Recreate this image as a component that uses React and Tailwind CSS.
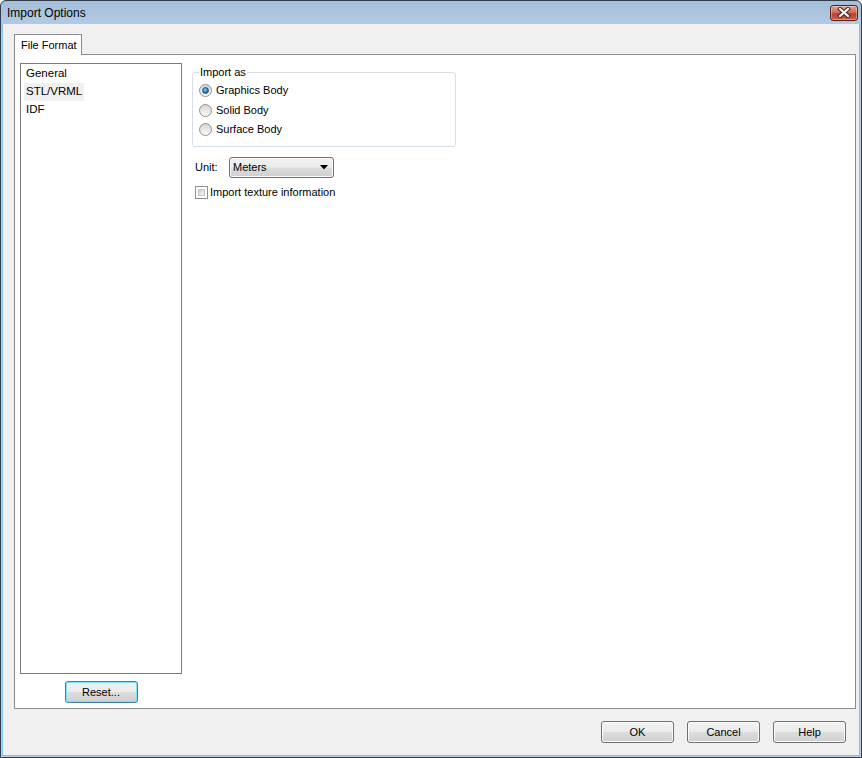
import React, { useState } from "react";

const font = { fontFamily: '"Liberation Sans", Arial, sans-serif' };

function CloseButton() {
  return (
    <div className="w-[28px] h-[16px] rounded-[3px] border border-[#5a1f1a] bg-[linear-gradient(to_bottom,#e3a08f_0%,#d0705d_45%,#b8402e_55%,#c8604c_100%)] flex items-center justify-center shadow-[inset_0_0_0_1px_rgba(255,255,255,0.35)]">
      <svg width="14" height="11" viewBox="0 0 14 11">
        <path d="M3 2 L11 9 M11 2 L3 9" stroke="#3b1d19" strokeWidth="4" strokeLinecap="square" />
        <path d="M3 2 L11 9 M11 2 L3 9" stroke="#ffffff" strokeWidth="2.2" strokeLinecap="square" />
      </svg>
    </div>
  );
}

function Radio({ checked, label, onClick }) {
  return (
    <div className="flex items-center h-[19.5px] cursor-default" onClick={onClick}>
      <div className="w-[13px] h-[13px] rounded-full border border-[#8e8f8f] bg-[linear-gradient(to_bottom,#d5d5d5,#fafafa)] flex items-center justify-center">
        {checked && (
          <div className="w-[7px] h-[7px] rounded-full bg-[radial-gradient(circle_at_40%_35%,#8fd6f7_0%,#2c8fd0_45%,#0d4d86_100%)] border border-[#1d4f7a]" />
        )}
      </div>
      <span className="ml-[4px] text-[11px] leading-none text-black">{label}</span>
    </div>
  );
}

function Button({ children, focused, className = "" }) {
  return (
    <button
      className={
        "h-[22px] rounded-[3px] border text-[11px] text-black bg-[linear-gradient(to_bottom,#f2f2f2_0%,#ebebeb_48%,#dddddd_52%,#cfcfcf_100%)] " +
        (focused
          ? "border-[#3c7fb1] shadow-[inset_0_0_0_1px_#7ee0fb] "
          : "border-[#707070] shadow-[inset_0_0_0_1px_#fcfcfc] ") +
        className
      }
    >
      {children}
    </button>
  );
}

export default function App() {
  const [mode, setMode] = useState("graphics");
  const [selected, setSelected] = useState("STL/VRML");
  const items = ["General", "STL/VRML", "IDF"];

  return (
    <div style={font} className="w-[862px] h-[758px] rounded-t-[6px] border border-[#2f3b48] bg-[linear-gradient(to_bottom,#a6bfd9_0%,#b9d1ea_40px)] flex flex-col overflow-hidden">
      {/* title bar */}
      <div className="h-[23px] flex items-center justify-between pl-[6px] pr-[3px] shrink-0">
        <span className="text-[12px] text-black">Import Options</span>
        <CloseButton />
      </div>

      {/* client area */}
      <div className="flex-1 mx-[1px] mb-[1px] border border-t-0 border-[#7fc4ec] bg-[#f0f0f0] flex flex-col pl-[11px] pr-[1px] pt-[10px]">
        {/* tab strip */}
        <div className="flex">
          <div className="relative z-10 w-[68px] h-[21px] pl-[6px] border border-b-0 border-[#898c95] bg-white flex items-center text-[11px] text-black">
            File Format
          </div>
        </div>

        {/* tab panel */}
        <div className="-mt-px w-[842px] h-[655px] border border-[#898c95] bg-white flex pl-[5px] pt-[8px]">
          {/* left list */}
          <div className="flex flex-col items-center w-[162px]">
            <div className="w-[162px] h-[611px] border border-[#7b7b7b] bg-white pt-[1px] pl-[3px]">
              {items.map((it) => (
                <div key={it} className="flex h-[18px]" onClick={() => setSelected(it)}>
                  <div
                    className={
                      "px-[2px] flex items-center text-[11.5px] text-black " +
                      (selected === it ? "bg-[#f0f0f0]" : "")
                    }
                  >
                    {it}
                  </div>
                </div>
              ))}
            </div>
            <Button focused className="mt-[7px] w-[73px] h-[21px]">
              Reset...
            </Button>
          </div>

          {/* right options */}
          <div className="ml-[10px] pt-[9px] flex flex-col">
            <div className="w-[264px] h-[75px] rounded-[3px] border border-[#d5dfe5] flex flex-col">
              <div className="-mt-[7px] ml-[6px] px-[1px] h-[13px] w-fit bg-white text-[11px] leading-[13px] text-black">
                Import as
              </div>
              <div className="mt-[2px] pl-[6px] flex flex-col">
                <Radio label="Graphics Body" checked={mode === "graphics"} onClick={() => setMode("graphics")} />
                <Radio label="Solid Body" checked={mode === "solid"} onClick={() => setMode("solid")} />
                <Radio label="Surface Body" checked={mode === "surface"} onClick={() => setMode("surface")} />
              </div>
            </div>

            <div className="mt-[10px] flex items-center pl-[3px]">
              <span className="w-[34px] text-[11px] text-black">Unit:</span>
              <div className="w-[105px] h-[21px] rounded-[3px] border border-[#707070] bg-[linear-gradient(to_bottom,#f2f2f2_0%,#ebebeb_48%,#dddddd_52%,#cfcfcf_100%)] shadow-[inset_0_0_0_1px_#fafafa] flex items-center justify-between pl-[3px] pr-[5px]">
                <span className="text-[11px] text-black">Meters</span>
                <svg width="8" height="5" viewBox="0 0 8 5">
                  <path d="M0 0 H8 L4 4.5 Z" fill="#000" />
                </svg>
              </div>
            </div>

            <div className="mt-[6px] flex items-center pl-[3px]">
              <div className="w-[13px] h-[13px] border border-[#8e8f8f] bg-white p-[2px]">
                <div className="w-full h-full bg-[linear-gradient(135deg,#cbcfd5,#f6f6f6)] border border-[#c0c3c8]" />
              </div>
              <span className="ml-[2px] text-[11px] text-black">Import texture information</span>
            </div>
          </div>
        </div>

        {/* dialog buttons */}
        <div className="mt-[12px] flex justify-end gap-[13px] pr-[12px]">
          <Button className="w-[73px]">OK</Button>
          <Button className="w-[73px]">Cancel</Button>
          <Button className="w-[73px]">Help</Button>
        </div>
      </div>
    </div>
  );
}
